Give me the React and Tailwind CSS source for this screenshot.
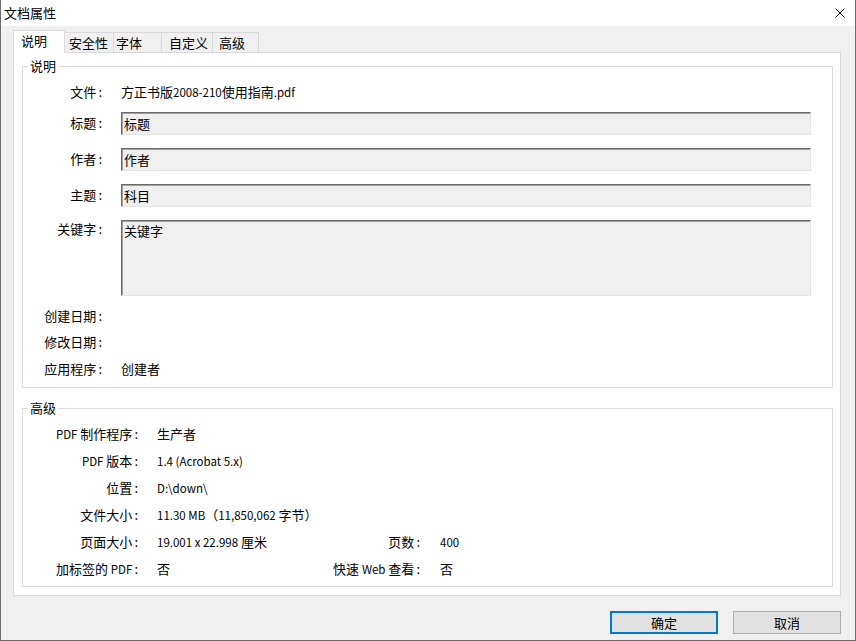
import React from "react";

const tabs = [
  { label: "安全性", w: "w-[49px]", pl: "pl-[4px]" },
  { label: "字体", w: "w-[48px]", pl: "pl-[2px]" },
  { label: "自定义", w: "w-[51px]", pl: "pl-[7px]" },
  { label: "高级", w: "w-[46px]", pl: "pl-[6px]" },
];

// latin runs are drawn smaller than the CJK glyphs, as in the system font
const L = ({ children }) => <span className="text-[11.5px]">{children}</span>;
// the system colon sits a little further from the text
const C = () => <span className="ml-[2px]">:</span>;

// text field with the classic sunken border
const Field = ({ value, tall }) => (
  <div
    className={`ml-[19px] w-[690px] ${tall ? "h-[76px] items-start pt-[1px]" : "h-[23px] items-center pb-[1px]"} flex pl-[2px] bg-[#f0f0f0] border-t border-l border-[#6a6a6a] border-r border-b border-r-[#e3e3e3] border-b-[#e3e3e3] shadow-[inset_1px_1px_0_#a0a0a0] leading-[17px]`}
  >
    {value}
  </div>
);

const InfoRow = ({ label, value, label2, value2 }) => (
  <div className="flex items-center h-[27px] leading-[17px]">
    <div className="w-[115px] text-right whitespace-nowrap">{label}<C /></div>
    <div className="ml-[19px] w-[150px] whitespace-nowrap">{value}</div>
    {label2 && <div className="w-[113px] text-right whitespace-nowrap">{label2}<C /></div>}
    {value2 && <div className="ml-[20px]">{value2}</div>}
  </div>
);

const App = () => {
  return (
    <div className="w-[856px] h-[641px] flex flex-col bg-[#f0f0f0] border-x border-b border-[#6b6b6b] text-[13px] text-black font-[family-name:'Noto_Sans_CJK_SC',sans-serif]">
      {/* title bar */}
      <div className="h-[26px] shrink-0 bg-white flex items-center justify-between pl-[3px] pr-[10px]">
        <span className="leading-[17px] pb-[2px]">文档属性</span>
        <svg width="10" height="10" viewBox="0 0 10 10">
          <path d="M0.5 0.5L9.5 9.5M9.5 0.5L0.5 9.5" stroke="#000" strokeWidth="1" />
        </svg>
      </div>

      <div className="flex-1 flex flex-col pl-[12px] pr-[14px] pt-[4px]">
        {/* tabs */}
        <div className="flex items-end h-[23px]">
          <div className="relative z-10 w-[52px] h-[23px] bg-white border-l border-t border-r border-[#d9d9d9] pl-[7px] pt-[1px] leading-[17px]">
            说明
          </div>
          {tabs.map((t) => (
            <div
              key={t.label}
              className={`${t.w} ${t.pl} h-[20px] mb-[1px] pb-[1px] flex items-center border-t border-r border-[#d9d9d9] leading-[17px]`}
            >
              {t.label}
            </div>
          ))}
        </div>

        {/* tab page */}
        <div className="-mt-px h-[544px] bg-white border border-[#d9d9d9] pl-[8px] pr-[7px]">
          <fieldset className="mt-[5px] border border-[#dcdcdc] p-0 m-0">
            <legend className="ml-[5px] px-[2px] leading-[16px]">说明</legend>
            <div className="pt-[9px] pb-[10px]">
              <div className="flex h-[17px] leading-[17px]">
                <div className="w-[79px] text-right">文件<C /></div>
                <div className="ml-[19px]">
                  方正书版<L>2008-210</L>使用指南<L>.pdf</L>
                </div>
              </div>
              <div className="flex items-center mt-[12px]">
                <div className="w-[79px] text-right leading-[17px] pb-[2px]">标题<C /></div>
                <Field value="标题" />
              </div>
              <div className="flex items-center mt-[13px]">
                <div className="w-[79px] text-right leading-[17px] pb-[2px]">作者<C /></div>
                <Field value="作者" />
              </div>
              <div className="flex items-center mt-[13px]">
                <div className="w-[79px] text-right leading-[17px] pb-[2px]">主题<C /></div>
                <Field value="科目" />
              </div>
              <div className="flex items-start mt-[13px]">
                <div className="w-[79px] text-right leading-[17px]">关键字<C /></div>
                <Field value="关键字" tall />
              </div>
              <div className="flex h-[17px] leading-[17px] mt-[11px]">
                <div className="w-[79px] text-right">创建日期<C /></div>
              </div>
              <div className="flex h-[17px] leading-[17px] mt-[9px]">
                <div className="w-[79px] text-right">修改日期<C /></div>
              </div>
              <div className="flex h-[17px] leading-[17px] mt-[10px]">
                <div className="w-[79px] text-right">应用程序<C /></div>
                <div className="ml-[19px]">创建者</div>
              </div>
            </div>
          </fieldset>

          <fieldset className="mt-[12px] border border-[#dcdcdc] p-0 m-0">
            <legend className="ml-[5px] px-[2px] leading-[16px]">高级</legend>
            <div className="pt-[4px] pb-[4px]">
              <InfoRow label={<><L>PDF</L> 制作程序</>} value="生产者" />
              <InfoRow label={<><L>PDF</L> 版本</>} value={<L>1.4 (Acrobat 5.x)</L>} />
              <InfoRow label="位置" value={<L>D:\down\</L>} />
              <InfoRow
                label="文件大小"
                value={<><L>11.30 MB</L>（<L>11,850,062</L> 字节）</>}
              />
              <InfoRow
                label="页面大小"
                value={<><L>19.001 x 22.998</L> 厘米</>}
                label2="页数"
                value2={<L>400</L>}
              />
              <InfoRow
                label={<>加标签的 <L>PDF</L></>}
                value="否"
                label2={<>快速 <L>Web</L> 查看</>}
                value2="否"
              />
            </div>
          </fieldset>
        </div>

        {/* buttons */}
        <div className="mt-[15px] flex justify-end gap-[15px]">
          <button className="w-[108px] h-[23px] pb-[1px] bg-[#e1e1e1] border-2 border-[#0078d7] leading-[17px]">确定</button>
          <button className="w-[108px] h-[23px] pb-[1px] bg-[#e1e1e1] border border-[#adadad] leading-[17px]">取消</button>
        </div>
      </div>
    </div>
  );
};

export default App;
